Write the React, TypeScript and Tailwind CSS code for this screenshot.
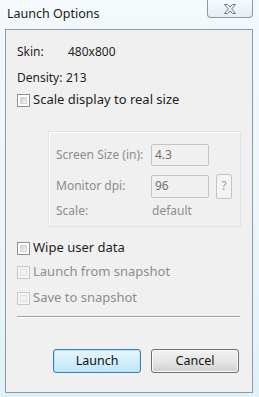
import React from "react";

function Checkbox({ disabled }: { disabled?: boolean }) {
  return (
    <div
      className={
        "w-[13px] h-[13px] border p-[2px] shrink-0 " +
        (disabled ? "border-[#c8c8c8] bg-[#f4f4f4]" : "border-[#8e8f8f] bg-white")
      }
    >
      <div
        className={
          "w-full h-full border " +
          (disabled
            ? "border-[#e2e2e2] bg-[#f2f2f2]"
            : "border-[#d4d4d4] bg-gradient-to-br from-[#cbcfd5] to-[#f6f6f6]")
        }
      />
    </div>
  );
}

export default function App() {
  const font = { fontFamily: '"Noto Sans", "Segoe UI", Arial, sans-serif' };
  return (
    <div
      className="w-[259px] h-[397px] flex flex-col overflow-hidden bg-gradient-to-b from-[#f4f9fc] via-[#eef6fa] to-[#dff2f8] text-[12px] text-[#1e1e1e]"
      style={font}
    >
      {/* title bar */}
      <div className="h-[29px] flex items-start shrink-0">
        <div className="pl-[7px] pt-[5px] text-[12.5px] text-[#1a1a1a] leading-[18px] flex-1">
          Launch Options
        </div>
        <div className="mr-[6px] w-[46px] h-[18px] rounded-b-[4px] border border-t-0 border-[#8b97a3] bg-gradient-to-b from-[#f6fbfd] to-[#e4eef4] flex items-center justify-center">
          <svg width="14" height="12" viewBox="0 0 14 12">
            <path
              d="M1.5 1.5 H4.5 L7 4.2 L9.5 1.5 H12.5 L8.6 6 L12.5 10.5 H9.5 L7 7.8 L4.5 10.5 H1.5 L5.4 6 Z"
              fill="#f8f8f8"
              stroke="#6c7680"
              strokeWidth="1"
              strokeLinejoin="round"
            />
          </svg>
        </div>
      </div>

      {/* client area */}
      <div className="ml-[5px] w-[248px] h-[364px] border border-[#8e9aa6] bg-[#f0f0f0] flex flex-col pl-[11px] shrink-0">
        <div className="mt-[12px] h-[20px] flex items-center">
          <span className="w-[51px]">Skin:</span>
          <span>480x800</span>
        </div>
        <div className="mt-[6px] h-[20px] flex items-center">
          <span className="w-[49px]">Density:</span>
          <span>213</span>
        </div>
        <div className="mt-[2px] h-[20px] flex items-center gap-[3px]">
          <Checkbox />
          <span className="text-[13px]">Scale display to real size</span>
        </div>

        {/* group box */}
        <div className="mt-[21px] ml-[31px] w-[193px] h-[96px] border border-[#dde3e8] shadow-[inset_1px_1px_0_#ffffff] flex flex-col pl-[7px] text-[#8d8d8d]">
          <div className="mt-[12px] h-[22px] flex items-center">
            <span className="w-[95px]">Screen Size (in):</span>
            <div className="w-[58px] h-[22px] border border-[#c4c4c4] rounded-[2px] bg-[#f0f0f0] flex items-center pl-[3px] text-[#707070]">
              4.3
            </div>
          </div>
          <div className="mt-[8px] h-[24px] flex items-center">
            <span className="w-[95px]">Monitor dpi:</span>
            <div className="w-[58px] h-[23px] border border-[#c4c4c4] rounded-[2px] bg-[#f0f0f0] flex items-center pl-[3px] text-[#707070]">
              96
            </div>
            <div className="ml-[7px] w-[16px] h-[25px] border border-[#c4c4c4] rounded-[2px] bg-[#f4f4f4] flex items-center justify-center text-[#9a9a9a]">
              ?
            </div>
          </div>
          <div className="mt-[4px] h-[18px] flex items-center">
            <span className="w-[96px]">Scale:</span>
            <span>default</span>
          </div>
        </div>

        <div className="mt-[11px] h-[20px] flex items-center gap-[3px]">
          <Checkbox />
          <span className="text-[13px]">Wipe user data</span>
        </div>
        <div className="mt-[4px] h-[20px] flex items-center gap-[3px] text-[#8d8d8d]">
          <Checkbox disabled />
          <span className="text-[13px]">Launch from snapshot</span>
        </div>
        <div className="mt-[6px] h-[20px] flex items-center gap-[3px] text-[#8d8d8d]">
          <Checkbox disabled />
          <span className="text-[13px]">Save to snapshot</span>
        </div>

        <div className="mt-[8px] w-[223px] h-[2px] border-t border-[#a0a0a0] border-b border-b-white" />

        <div className="mt-[31px] flex gap-[10px] pl-[36px]">
          <div className="w-[88px] h-[24px] rounded-[3px] border border-[#3c7fb1] shadow-[inset_0_0_0_1px_#b5e4fa] bg-gradient-to-b from-[#e8f6fd] via-[#d4eefb] to-[#bde6fd] flex items-center justify-center text-[12.5px] text-[#111]">
            Launch
          </div>
          <div className="w-[88px] h-[24px] rounded-[3px] border border-[#707070] shadow-[inset_0_0_0_1px_#fbfbfb] bg-gradient-to-b from-[#f2f2f2] via-[#e6e6e6] to-[#d0d0d0] flex items-center justify-center text-[12.5px] text-[#111]">
            Cancel
          </div>
        </div>
      </div>
    </div>
  );
}
